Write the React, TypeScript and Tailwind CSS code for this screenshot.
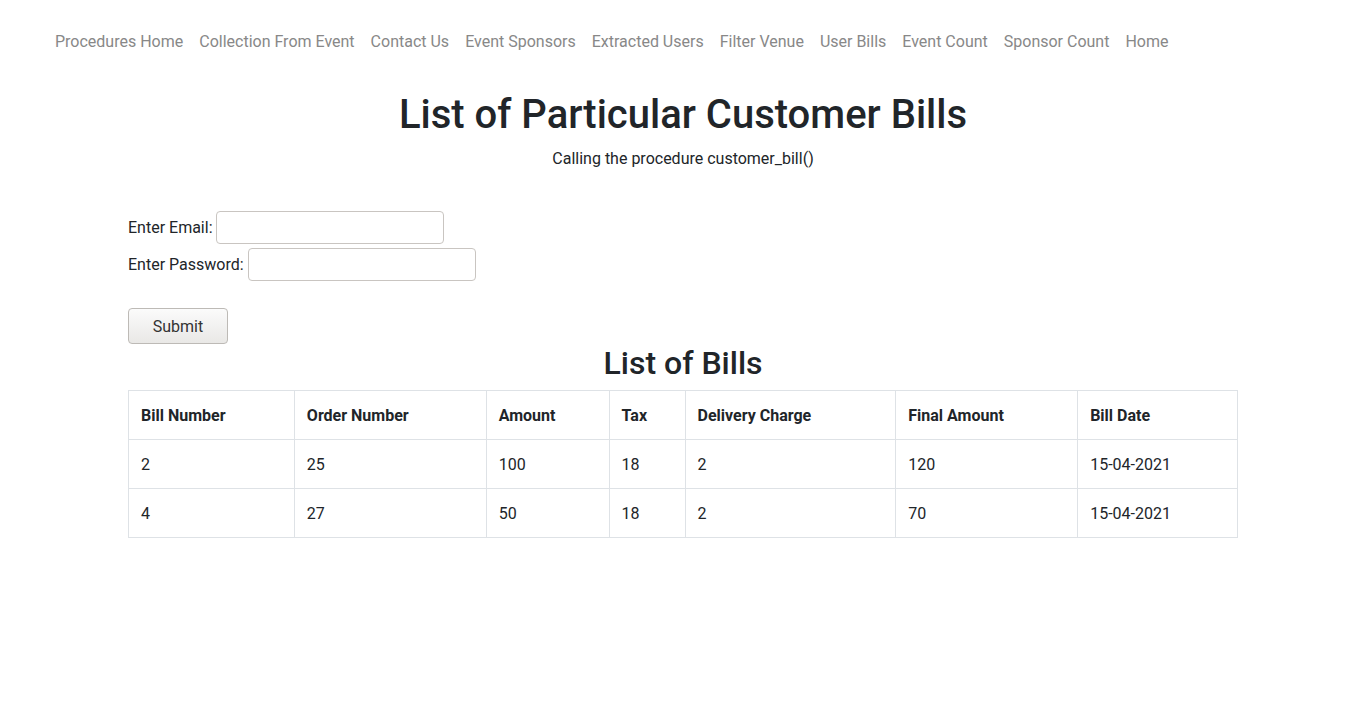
const links = [
  'Procedures Home',
  'Collection From Event',
  'Contact Us',
  'Event Sponsors',
  'Extracted Users',
  'Filter Venue',
  'User Bills',
  'Event Count',
  'Sponsor Count',
  'Home',
];

const columns = [
  { label: 'Bill Number', width: 'w-[166px]' },
  { label: 'Order Number', width: 'w-[192px]' },
  { label: 'Amount', width: 'w-[123px]' },
  { label: 'Tax', width: 'w-[76px]' },
  { label: 'Delivery Charge', width: 'w-[211px]' },
  { label: 'Final Amount', width: 'w-[182px]' },
  { label: 'Bill Date', width: 'w-[160px]' },
];

const bills = [
  ['2', '25', '100', '18', '2', '120', '15-04-2021'],
  ['4', '27', '50', '18', '2', '70', '15-04-2021'],
];

const App = () => {
  return (
    <div className="min-h-screen bg-white text-[#212529] font-['Roboto',sans-serif] text-base leading-6">
      <nav className="pt-[30px] pl-[47px]">
        <ul className="flex items-center">
          {links.map((l) => (
            <li key={l}>
              <a href="#" className="px-2 text-[#888888] hover:text-[#555555]">
                {l}
              </a>
            </li>
          ))}
        </ul>
      </nav>

      <div className="mx-auto w-[1110px]">
        <h1 className="mt-[37px] mb-2 text-center text-[40px] leading-[48px] font-medium">
          List of Particular Customer Bills
        </h1>
        <p className="text-center">Calling the procedure customer_bill()</p>

        <form className="mt-[40px]" onSubmit={(e) => e.preventDefault()}>
          <div className="flex h-[33px] items-center">
            <label htmlFor="email">Enter Email:</label>
            <input
              id="email"
              type="email"
              className="ml-[3px] h-[33px] w-[228px] rounded-[4px] border border-[#c9c5c1] bg-white px-2 outline-none"
            />
          </div>
          <div className="mt-1 flex h-[33px] items-center">
            <label htmlFor="password">Enter Password:</label>
            <input
              id="password"
              type="password"
              className="ml-1 h-[33px] w-[228px] rounded-[4px] border border-[#c9c5c1] bg-white px-2 outline-none"
            />
          </div>
          <button
            type="submit"
            className="mt-[27px] h-[36px] w-[100px] rounded-[4px] border border-[#bdbab6] bg-gradient-to-b from-[#fbfbfb] to-[#e9e8e6] pt-[2px] text-[#333333]"
          >
            Submit
          </button>
        </form>

        <h2 className="mb-2 text-center text-[32px] leading-[38px] font-medium">List of Bills</h2>

        <table className="w-full border-collapse border border-[#dee2e6] text-left">
          <thead>
            <tr>
              {columns.map((c) => (
                <th key={c.label} className={`${c.width} border border-[#dee2e6] px-3 pt-[13px] pb-[11px] font-bold`}>
                  {c.label}
                </th>
              ))}
            </tr>
          </thead>
          <tbody>
            {bills.map((row, i) => (
              <tr key={i}>
                {row.map((cell, j) => (
                  <td key={j} className="border border-[#dee2e6] px-3 pt-[13px] pb-[11px]">
                    {cell}
                  </td>
                ))}
              </tr>
            ))}
          </tbody>
        </table>
      </div>
    </div>
  );
};

export default App;
